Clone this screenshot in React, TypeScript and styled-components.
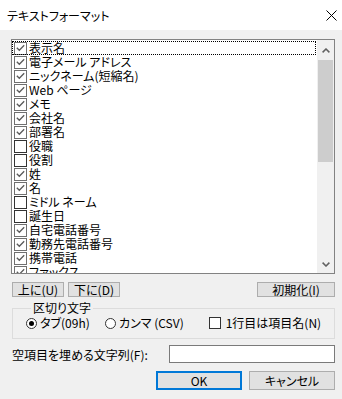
import React from 'react'
import styled, { createGlobalStyle } from 'styled-components'

const GlobalStyle = createGlobalStyle`
  html, body {
    margin: 0;
    padding: 0;
    background: #f0f0f0;
  }
  body {
    font-family: "Noto Sans CJK JP", "Noto Sans", sans-serif;
    font-feature-settings: "palt";
    font-size: 12px;
    color: #000;
  }
  * { box-sizing: border-box; }
`

const fields: [string, boolean][] = [
  ['表示名', true],
  ['電子メール アドレス', true],
  ['ニックネーム(短縮名)', true],
  ['Web ページ', true],
  ['メモ', true],
  ['会社名', true],
  ['部署名', true],
  ['役職', false],
  ['役割', false],
  ['姓', true],
  ['名', true],
  ['ミドル ネーム', false],
  ['誕生日', false],
  ['自宅電話番号', true],
  ['勤務先電話番号', true],
  ['携帯電話', true],
  ['ファックス', true],
]

const Window = styled.div`
  width: 342px;
  height: 399px;
  background: #f0f0f0;
  display: flex;
  flex-direction: column;
  overflow: hidden;
`

const TitleBar = styled.div`
  height: 30px;
  background: #fff;
  display: flex;
  align-items: center;
  justify-content: space-between;
  padding: 0 5px 0 7px;
  font-size: 12px;
`

const Body = styled.div`
  display: flex;
  flex-direction: column;
  padding: 9px 7px 0 11px;
`

const ListBox = styled.div`
  height: 235px;
  border: 1px solid #828282;
  display: flex;
  background: #fff;
`

const List = styled.div`
  flex: 1;
  overflow: hidden;
  padding-top: 1px;
`

const Row = styled.div<{ $focus?: boolean }>`
  height: 14px;
  margin-right: 1px;
  display: flex;
  align-items: center;
  padding-left: 2px;
  line-height: 14px;
  white-space: nowrap;
  outline: ${p => (p.$focus ? '1px dotted #000' : 'none')};
  outline-offset: -1px;
`

const Check = styled.span<{ $on: boolean; $size?: number }>`
  width: ${p => p.$size ?? 13}px;
  height: ${p => p.$size ?? 13}px;
  flex: none;
  border: 1px solid ${p => (p.$on ? '#707070' : '#333')};
  background: #fff;
  margin-right: 2px;
  display: flex;
  align-items: center;
  justify-content: center;
`

const ScrollBar = styled.div`
  width: 17px;
  background: #f0f0f0;
  display: flex;
  flex-direction: column;
`

const ArrowBtn = styled.div<{ $top?: boolean }>`
  height: 17px;
  margin-top: ${p => (p.$top ? '2px' : 'auto')};
  display: flex;
  align-items: center;
  justify-content: center;
`

const Thumb = styled.div`
  height: 102px;
  margin: 1px 1px 0;
  background: #cdcdcd;
`

const ButtonRow = styled.div`
  display: flex;
  gap: 4px;
  margin-top: 8px;
  padding-left: 1px;
`

const Button = styled.button<{ $w: number; $h?: number; $default?: boolean }>`
  width: ${p => p.$w}px;
  height: ${p => p.$h ?? 15}px;
  padding: 0;
  background: #e1e1e1;
  border: ${p => (p.$default ? '2px solid #0078d7' : '1px solid #adadad')};
  font: inherit;
  font-size: 12px;
  line-height: 1;
  color: #000;
  display: flex;
  align-items: center;
  justify-content: center;
`

const Spacer = styled.div`
  margin-left: auto;
`

const Group = styled.fieldset`
  margin: 4px 0 0 1px;
  padding: 1px 0 8px 13px;
  border: 1px solid #dcdcdc;
  display: flex;
  align-items: center;
  min-width: 0;
`

const Legend = styled.legend`
  margin-left: 5px;
  padding: 0 2px;
  line-height: 14px;
  font-size: 12px;
`

const Option = styled.label<{ $w: number }>`
  width: ${p => p.$w}px;
  height: 14px;
  display: flex;
  align-items: center;
  white-space: nowrap;
  line-height: 14px;
`

const Radio = styled.span<{ $on: boolean }>`
  width: 11px;
  height: 11px;
  border-radius: 50%;
  border: 1px solid #333;
  background: #fff;
  margin-right: 3px;
  display: flex;
  align-items: center;
  justify-content: center;
  &::after {
    content: '';
    width: 5px;
    height: 5px;
    border-radius: 50%;
    background: ${p => (p.$on ? '#000' : 'transparent')};
  }
`

const FillRow = styled.div`
  display: flex;
  align-items: center;
  margin-top: 6px;
  padding-left: 1px;
  height: 18px;
`

const TextInput = styled.div`
  margin-left: auto;
  width: 166px;
  height: 18px;
  background: #fff;
  border: 1px solid #7a7a7a;
`

const Footer = styled.div`
  display: flex;
  justify-content: flex-end;
  gap: 7px;
  margin-top: 8px;
`

const CheckMark = () => (
  <svg width="9" height="8" viewBox="0 0 9 8">
    <path d="M0.8 3.8 L3.3 6.3 L8.2 1.2" fill="none" stroke="#5a5a5a" strokeWidth="1.3" />
  </svg>
)

const Chevron = ({ down = false }: { down?: boolean }) => (
  <svg width="8" height="5" viewBox="0 0 8 5">
    <path
      d={down ? 'M0.6 0.6 L4 4 L7.4 0.6' : 'M0.6 4.4 L4 1 L7.4 4.4'}
      fill="none"
      stroke="#606060"
      strokeWidth="1.5"
    />
  </svg>
)

export default function App() {
  return (
    <>
      <GlobalStyle />
      <Window>
        <TitleBar>
          <span>テキストフォーマット</span>
          <svg width="11" height="11" viewBox="0 0 11 11">
            <path d="M0.5 0.5 L10.5 10.5 M10.5 0.5 L0.5 10.5" stroke="#000" strokeWidth="1" />
          </svg>
        </TitleBar>
        <Body>
          <ListBox>
            <List>
              {fields.map(([name, on], i) => (
                <Row key={name} $focus={i === 0}>
                  <Check $on={on}>{on && <CheckMark />}</Check>
                  {name}
                </Row>
              ))}
            </List>
            <ScrollBar>
              <ArrowBtn $top>
                <Chevron />
              </ArrowBtn>
              <Thumb />
              <ArrowBtn>
                <Chevron down />
              </ArrowBtn>
            </ScrollBar>
          </ListBox>

          <ButtonRow>
            <Button $w={52}>上に(U)</Button>
            <Button $w={52}>下に(D)</Button>
            <Spacer />
            <Button $w={78}>初期化(I)</Button>
          </ButtonRow>

          <Group>
            <Legend>区切り文字</Legend>
            <Option $w={79}>
              <Radio $on />
              タブ(09h)
            </Option>
            <Option $w={104}>
              <Radio $on={false} />
              カンマ (CSV)
            </Option>
            <Option $w={120}>
              <Check $on={false} $size={12}>{null}</Check>
              &nbsp;1行目は項目名(N)
            </Option>
          </Group>

          <FillRow>
            空項目を埋める文字列(F):
            <TextInput />
          </FillRow>

          <Footer>
            <Button $w={86} $h={19} $default>OK</Button>
            <Button $w={86} $h={19}>キャンセル</Button>
          </Footer>
        </Body>
      </Window>
    </>
  )
}
